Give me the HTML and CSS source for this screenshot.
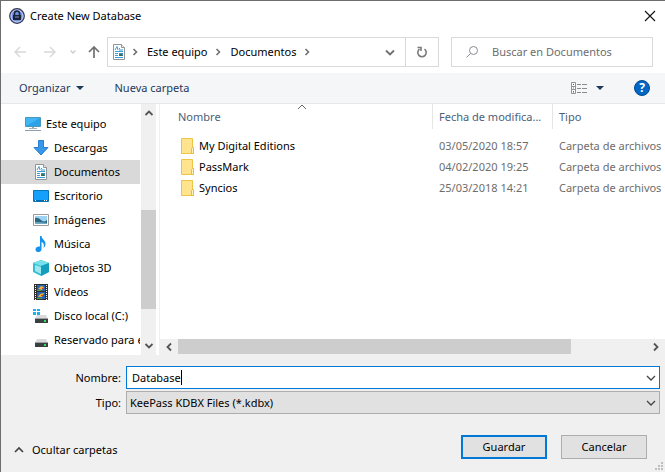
FILE: index.html
```html
<!DOCTYPE html>
<html lang="es">
<head>
<meta charset="utf-8">
<title>Create New Database</title>
<link rel="stylesheet" href="styles.css">
</head>
<body>
<svg class="defs" aria-hidden="true">
  <symbol id="doc" viewBox="0 0 16 16">
    <path d="M2.5.5h8l3 3v12h-11z" fill="#fff" stroke="#8f9496"/>
    <path d="M10.500.5v3h3" fill="#eee" stroke="#8f9496"/>
    <path d="M4 6l2-3.500L7 6M8 4.500h1M8 6h4M4 7.500h8M4 9.500h3M4 11.500h3M4 13.500h8" fill="none" stroke="#3c9bd9"/>
    <path d="M8 9h4v3H8z" fill="#4389b5"/><path d="M8 11l2-1 2 2H8z" fill="#2e6b50"/>
  </symbol>
  <symbol id="folder" viewBox="0 0 14 16">
    <path d="M.5.5h11v9h1v6H.5z" fill="#ffe38f" stroke="#ecc545"/>
    <path d="M10.500 15.500v-5l1-1h1v6z" fill="#fff0b8" stroke="#e7bd3c"/>
  </symbol>
  <symbol id="drive" viewBox="0 0 16 16">
    <path d="M4 7h9l2 4H2z" fill="#d9dbdc"/><path d="M2 10.500h13V15H2z" fill="#3b3f41"/><path d="M2 10h13v1H2z" fill="#9da1a3"/><path d="M11 12h2v2h-2z" fill="#35e05b"/>
  </symbol>
  <symbol id="chev" viewBox="0 0 10 10"><path d="M1 3l4 4 4-4" fill="none" stroke="currentColor" stroke-width="1.300"/></symbol>
</svg>
<div class="dialog">
  <header class="title">
    <svg class="i16" viewBox="0 0 16 16"><circle cx="8" cy="8" r="7.300" fill="#6f8fe0" stroke="#34374a" stroke-width="1.200"/><circle cx="8" cy="8" r="6" fill="none" stroke="#c3cff5"/><path d="M5.500 7.500V5.500a2.500 2.500 0 0 1 5 0v2" fill="none" stroke="#1d2236" stroke-width="1.500"/><path d="M4 7h8v5H4z" fill="#1d2236"/><path d="M6 9h4" stroke="#7b8fce"/></svg>
    <h1>Create New Database</h1>
    <button class="plain close" aria-label="Cerrar"><svg viewBox="0 0 12 12"><path d="M1 1l10 10M11 1L1 11" fill="none" stroke="#111" stroke-width="1.100"/></svg></button>
  </header>
  <nav class="nav">
    <div class="arrows">
      <button class="plain" aria-label="Atrás"><svg viewBox="0 0 12 12"><path d="M12 6H1M6 1L1 6l5 5" fill="none" stroke="#d9d9d9" stroke-width="1.500"/></svg></button>
      <button class="plain" aria-label="Adelante"><svg viewBox="0 0 12 12"><path d="M0 6h11M6 1l5 5-5 5" fill="none" stroke="#d9d9d9" stroke-width="1.500"/></svg></button>
      <button class="plain recent" aria-label="Recientes"><svg viewBox="0 0 8 12"><path d="M1.500 4.500L4 7l2.500-2.500" fill="none" stroke="#cfcfcf" stroke-width="1.500"/></svg></button>
      <button class="plain up" aria-label="Subir"><svg viewBox="0 0 12 12"><path d="M6 12V1M1 6l5-5 5 5" fill="none" stroke="#707070" stroke-width="1.700"/></svg></button>
    </div>
    <div class="address">
      <svg class="i16" aria-hidden="true"><use href="#doc"/></svg>
      <svg class="sep" viewBox="0 0 6 8"><path d="M1.500 1L4.500 4l-3 3" fill="none" stroke="#707070" stroke-width="1.600"/></svg>
      <a href="#">Este equipo</a>
      <svg class="sep" viewBox="0 0 6 8"><path d="M1.500 1L4.500 4l-3 3" fill="none" stroke="#707070" stroke-width="1.600"/></svg>
      <a href="#">Documentos</a>
      <svg class="sep" viewBox="0 0 6 8"><path d="M1.500 1L4.500 4l-3 3" fill="none" stroke="#707070" stroke-width="1.600"/></svg>
      <button class="plain drop" aria-label="Historial"><svg viewBox="0 0 12 12"><path d="M2 4.500l4 4 4-4" fill="none" stroke="#707070" stroke-width="1.800"/></svg></button>
      <button class="plain refresh" aria-label="Actualizar"><svg viewBox="0 0 12 12"><path d="M8.500 3.200A4.200 4.200 0 1 1 3.500 3.200M1.500 1.500h3.500v3.500" fill="none" stroke="#7a7a7a" stroke-width="1.600"/></svg></button>
    </div>
    <label class="search">
      <svg viewBox="0 0 12 12"><circle cx="7.500" cy="4.500" r="4" fill="none" stroke="#8a8a94"/><path d="M4.500 7.500L.5 11.500" stroke="#8a8a94"/></svg>
      <input type="search" aria-label="Buscar" placeholder="Buscar en Documentos">
    </label>
  </nav>
  <div class="toolbar">
    <button class="plain">Organizar <svg class="tri" viewBox="0 0 8 4"><path d="M0 0h8L4 4z" fill="#1e395b"/></svg></button>
    <button class="plain">Nueva carpeta</button>
    <button class="plain view" aria-label="Vista"><svg class="i16" viewBox="0 0 16 16"><path d="M.5 2.500h4v11h-4zM.5 6.500h4M.5 9.500h4" fill="#fff" stroke="#929292"/><path d="M6 4.500h4m1 0h5M6 8.500h4m1 0h5M6 12.500h4m1 0h5" stroke="#8b8b8b"/><path d="M2 4h1v1H2z" fill="#666"/><path d="M2 7.500h1v1H2z" fill="#2a8bd8"/><path d="M2 11h1v1.500H2z" fill="#d33"/></svg><svg class="tri" viewBox="0 0 8 4"><path d="M0 0h8L4 4z" fill="#1e395b"/></svg></button>
    <button class="help" aria-label="Ayuda">?</button>
  </div>
  <main class="main">
    <aside class="side">
      <ul class="tree">
        <li class="root"><svg class="i16" viewBox="0 0 16 16"><path d="M.5 1.500h15v9H.5z" fill="#42b6f5" stroke="#4a97bd"/><path d="M1 10l14-8v8z" fill="#2aa2e8"/><path d="M7 11h2v2H7z" fill="#9aa"/><path d="M4 12.500h8" stroke="#a5b0b5"/><path d="M0 14.500h16" stroke="#8da0b0"/></svg>Este equipo</li>
        <li><svg class="i16" viewBox="0 0 16 16"><path d="M5.500.5h5v7h4.500L8 15 1 7.500h4.500z" fill="#3797e8" stroke="#2a7ecb"/></svg>Descargas</li>
        <li class="selected"><svg class="i16"><use href="#doc"/></svg>Documentos</li>
        <li><svg class="i16" viewBox="0 0 16 16"><path d="M.5 2.500h15v11H.5z" fill="#15a0fb" stroke="#0875b8"/><path d="M1 12.500h14" stroke="#0868a5"/><path d="M2 12.500h1m8 0h1m1 0h1" stroke="#fff"/></svg>Escritorio</li>
        <li><svg class="i16" viewBox="0 0 16 16"><path d="M.5 2.500h15v11H.5z" fill="#fff" stroke="#9b9b9b"/><path d="M2 4h12v8H2z" fill="#9cd2f2"/><path d="M2 6q3-1 6 2t6 0v4H2z" fill="#2d6682"/><path d="M2 10q6 0 12 1v1H2z" fill="#6eacc5"/></svg>Imágenes</li>
        <li><svg class="i16" viewBox="0 0 16 16"><path d="M7 0h1.500c0 3 4 4 4 8 0 2-1 3-2 4 1-4 0-5-2-6v7c0 4-6 4-6 .5C2.500 11 5 10 7 10.500z" fill="#1592ed"/></svg>Música</li>
        <li><svg class="i16" viewBox="0 0 16 16"><path d="M8 0l8 3v9l-8 4-8-4V3z" fill="#32bfd5"/><path d="M0 3l8-3 8 3-8 3z" fill="#78e0ea"/><path d="M8 6l8-3v9l-8 4z" fill="#149ebd"/><path d="M2 5l6 2v7l-6-3z" fill="#9be9ef"/></svg>Objetos 3D</li>
        <li><svg class="i16" viewBox="0 0 16 16"><path d="M1 0h14v16H1z" fill="#303030"/><path d="M2.500 1v15M13.500 1v15" stroke="#fff" stroke-dasharray="1 1"/><path d="M4 1h8v6H4zM4 8h8v7H4z" fill="#2862b7"/><path d="M5 5l3-3 3 1-2 3zM5 13l2-3 4-1-2 4z" fill="#e9b42c"/><path d="M4 6h4v1H4zM4 14h5v1H4z" fill="#4ca13e"/><path d="M9 4h2v1H9zM8 11h2v1H8z" fill="#d43b26"/></svg>Vídeos</li>
        <li><svg class="i16" viewBox="0 0 16 16"><use href="#drive"/><path d="M0 1h3v2H0zM4 1h3v2H4zM0 4h3v3H0zM4 4h3v3H4z" fill="#11b5f2"/></svg>Disco local (C:)</li>
        <li><svg class="i16"><use href="#drive"/></svg>Reservado para el sistema</li>
      </ul>
      <div class="vscroll" aria-hidden="true">
        <svg viewBox="0 0 10 10"><path d="M1.500 7L5 3.500 8.500 7" fill="none" stroke="#555" stroke-width="1.800"/></svg>
        <div class="track"><div class="thumb"></div></div>
        <svg viewBox="0 0 10 10"><path d="M1.500 3L5 6.500 8.500 3" fill="none" stroke="#555" stroke-width="1.800"/></svg>
      </div>
    </aside>
    <section class="files">
      <table>
        <colgroup><col><col class="date"><col class="type"></colgroup>
        <thead><tr><th><div>Nombre<svg class="sort" viewBox="0 0 10 6"><path d="M1 5l4-4 4 4" fill="none" stroke="#666"/></svg></div></th><th><div>Fecha de modifica...</div></th><th><div>Tipo</div></th></tr></thead>
        <tbody>
          <tr><td><span class="name"><svg><use href="#folder"/></svg>My Digital Editions</span></td><td>03/05/2020 18:57</td><td>Carpeta de archivos</td></tr>
          <tr><td><span class="name"><svg><use href="#folder"/></svg>PassMark</span></td><td>04/02/2020 19:25</td><td>Carpeta de archivos</td></tr>
          <tr><td><span class="name"><svg><use href="#folder"/></svg>Syncios</span></td><td>25/03/2018 14:21</td><td>Carpeta de archivos</td></tr>
        </tbody>
      </table>
      <div class="hscroll" aria-hidden="true">
        <svg viewBox="0 0 10 10"><path d="M7 1.500L3.500 5 7 8.500" fill="none" stroke="#555" stroke-width="1.800"/></svg>
        <div class="track"><div class="thumb"></div></div>
        <svg viewBox="0 0 10 10"><path d="M3 1.500L6.500 5 3 8.500" fill="none" stroke="#555" stroke-width="1.800"/></svg>
      </div>
    </section>
  </main>
  <form class="form">
    <label for="name">Nombre:</label>
    <div class="combo active"><input id="name" type="text" value="Database"><span class="caret"></span><svg class="arrow"><use href="#chev"/></svg></div>
    <label for="kind">Tipo:</label>
    <div class="combo"><select id="kind"><option>KeePass KDBX Files (*.kdbx)</option></select><svg class="arrow"><use href="#chev"/></svg></div>
  </form>
  <footer class="footer">
    <button class="plain toggle"><svg viewBox="0 0 10 10"><path d="M1 7l4-4 4 4" fill="none" stroke="#444" stroke-width="1.700"/></svg>Ocultar carpetas</button>
    <button class="btn primary">Guardar</button>
    <button class="btn">Cancelar</button>
  </footer>
  <svg class="grip" viewBox="0 0 8 8"><path d="M6 0h2v2H6zM3 3h2v2H3zM6 3h2v2H6zM0 6h2v2H0zM3 6h2v2H3zM6 6h2v2H6z" fill="#bfbfbf"/></svg>
</div>
</body>
</html>
```
FILE: styles.css
```css
* { box-sizing: border-box; }
body { margin: 0; background: #f0f0f0; color: #000; font: 11px/16px "Noto Sans", "Open Sans", sans-serif; }
svg { display: block; flex: none; }
button, input, select { font: inherit; color: inherit; }
.defs { display: none; }
.i16 { width: 16px; height: 16px; }
.plain { display: flex; align-items: center; padding: 0; border: 0; background: none; white-space: nowrap; }

.dialog { position: relative; display: flex; flex-direction: column; min-height: 100vh; border: solid #6d6d6d; border-width: 1px 0 0 1px; }

.title { display: flex; align-items: center; gap: 5px; height: 29px; padding: 0 9px 0 8px; background: #fff; }
.title h1 { margin: 0; font-size: 11px; font-weight: 400; }
.close { margin-left: auto; }
.close svg { width: 12px; height: 12px; }

.nav { display: flex; align-items: center; gap: 12px; height: 43px; padding: 0 12px 0 13px; background: #fff; }
.arrows { display: flex; align-items: center; margin-right: -5px; }
.arrows svg { width: 12px; height: 12px; }
.arrows button + button { margin-left: 18px; }
.arrows button.recent { margin-left: 13px; }
.arrows .recent svg { width: 8px; }
.arrows button.up { margin-left: 11px; }
.address { display: flex; flex: 1; align-items: center; height: 30px; padding-left: 3px; border: 1px solid #d9d9d9; }
.address a { margin: 0 8px 0 9px; color: #000; text-decoration: none; white-space: nowrap; }
.sep { width: 6px; height: 8px; }
.address .i16 { margin-right: 5px; }
.drop { margin-left: auto; margin-right: 9px; }
.drop svg, .refresh svg { width: 12px; height: 12px; }
.refresh { justify-content: center; width: 33px; height: 28px; border-left: 1px solid #d9d9d9; }
.search { display: flex; flex: 0 1 202px; align-items: center; gap: 14px; min-width: 0; height: 30px; padding-left: 14px; border: 1px solid #d9d9d9; }
.search svg { width: 12px; height: 12px; }
.search input { flex: 1; min-width: 0; padding: 0; border: 0; outline: 0; background: none; }
.search input::placeholder { color: #6d6d6d; opacity: 1; }

.toolbar { display: flex; align-items: center; gap: 30px; height: 31px; padding: 0 15px 0 18px; border-bottom: 1px solid #e5e7ea; background: #f5f6f7; color: #1e395b; }
.tri { width: 8px; height: 4px; margin-left: 6px; }
.view { margin-left: auto; }
.view .tri { margin-left: 9px; }
.help { width: 16px; height: 16px; padding: 0; border: 1px solid #004c8c; border-radius: 50%; background: #0067c6; color: #fff; font-size: 12px; font-weight: 700; line-height: 14px; }

.main { display: flex; flex: 1; min-height: 251px; background: #fff; }
.side { display: flex; width: 159px; padding-right: 3px; border-right: 1px solid #f0f0f0; }
.tree { flex: 1; min-width: 0; margin: 0 1px 0 0; padding: 8px 0 0; overflow: hidden; list-style: none; }
.tree li { display: flex; align-items: center; gap: 5px; height: 24px; padding-left: 32px; overflow: hidden; white-space: nowrap; }
.tree .root { padding-left: 24px; }
.tree .selected { background: #d9d9d9; }
.vscroll { display: flex; flex-direction: column; align-items: center; width: 15px; padding: 4px 0; background: #f0f0f0; }
.vscroll svg, .hscroll svg { width: 10px; height: 10px; }
.track { display: flex; flex: 1; }
.vscroll .track { width: 100%; padding: 92px 0 32px; }
.thumb { flex: 1; background: #cdcdcd; }
.files { display: flex; flex: 1; flex-direction: column; min-width: 0; }
.files table { width: 100%; border-collapse: collapse; table-layout: fixed; }
.date { width: 120px; }
.type { width: 113px; }
th { padding: 0 0 6px; color: #4c607a; font-weight: 400; text-align: left; }
th div { position: relative; height: 25px; padding-left: 6px; border-left: 1px solid #e5e5e5; line-height: 25px; white-space: nowrap; overflow: hidden; }
th:first-child div { padding-left: 18px; border-left: 0; }
.sort { position: absolute; top: 0; left: calc(50% + 1px); width: 10px; height: 6px; }
td { height: 21px; padding: 0 0 0 7px; color: #6d6d6d; white-space: nowrap; }
td:first-child { padding-left: 21px; color: #000; }
.name { display: flex; align-items: center; gap: 4px; }
.name svg { width: 14px; height: 16px; }
.hscroll { display: flex; align-items: center; height: 16px; margin-top: auto; padding: 0 4px; background: #f0f0f0; }
.hscroll .track { align-self: flex-start; height: 15px; padding: 0 80px 0 4px; }

.form { display: grid; grid-template-columns: 120px 1fr; gap: 2px 5px; padding: 11px 5px 0 0; }
.form label { align-self: center; text-align: right; }
.combo { position: relative; height: 23px; border: 1px solid #adadad; background: #e1e1e1; }
.combo.active { border-color: #0078d7; background: #fff; }
.combo input, .combo select { display: block; width: 100%; height: 21px; padding: 0 24px 0 5px; border: 0; outline: 0; background: none; appearance: none; }
.combo select { padding-left: 3px; }
.arrow { position: absolute; top: 6px; right: 3px; width: 10px; height: 10px; color: #444; pointer-events: none; }
.caret { position: absolute; top: 3px; left: 54px; width: 1px; height: 15px; background: #000; }

.footer { display: flex; align-items: flex-start; gap: 14px; padding: 21px 18px 12px 13px; }
.toggle { height: 30px; margin-right: auto; gap: 8px; }
.toggle svg { width: 10px; height: 10px; }
.btn { width: 86px; height: 24px; padding: 0; border: 1px solid #adadad; background: #e1e1e1; }
.btn.primary { border: 2px solid #0078d7; }
.footer { height: 58px; }
.grip { position: absolute; right: 2px; bottom: 2px; width: 8px; height: 8px; }
```
